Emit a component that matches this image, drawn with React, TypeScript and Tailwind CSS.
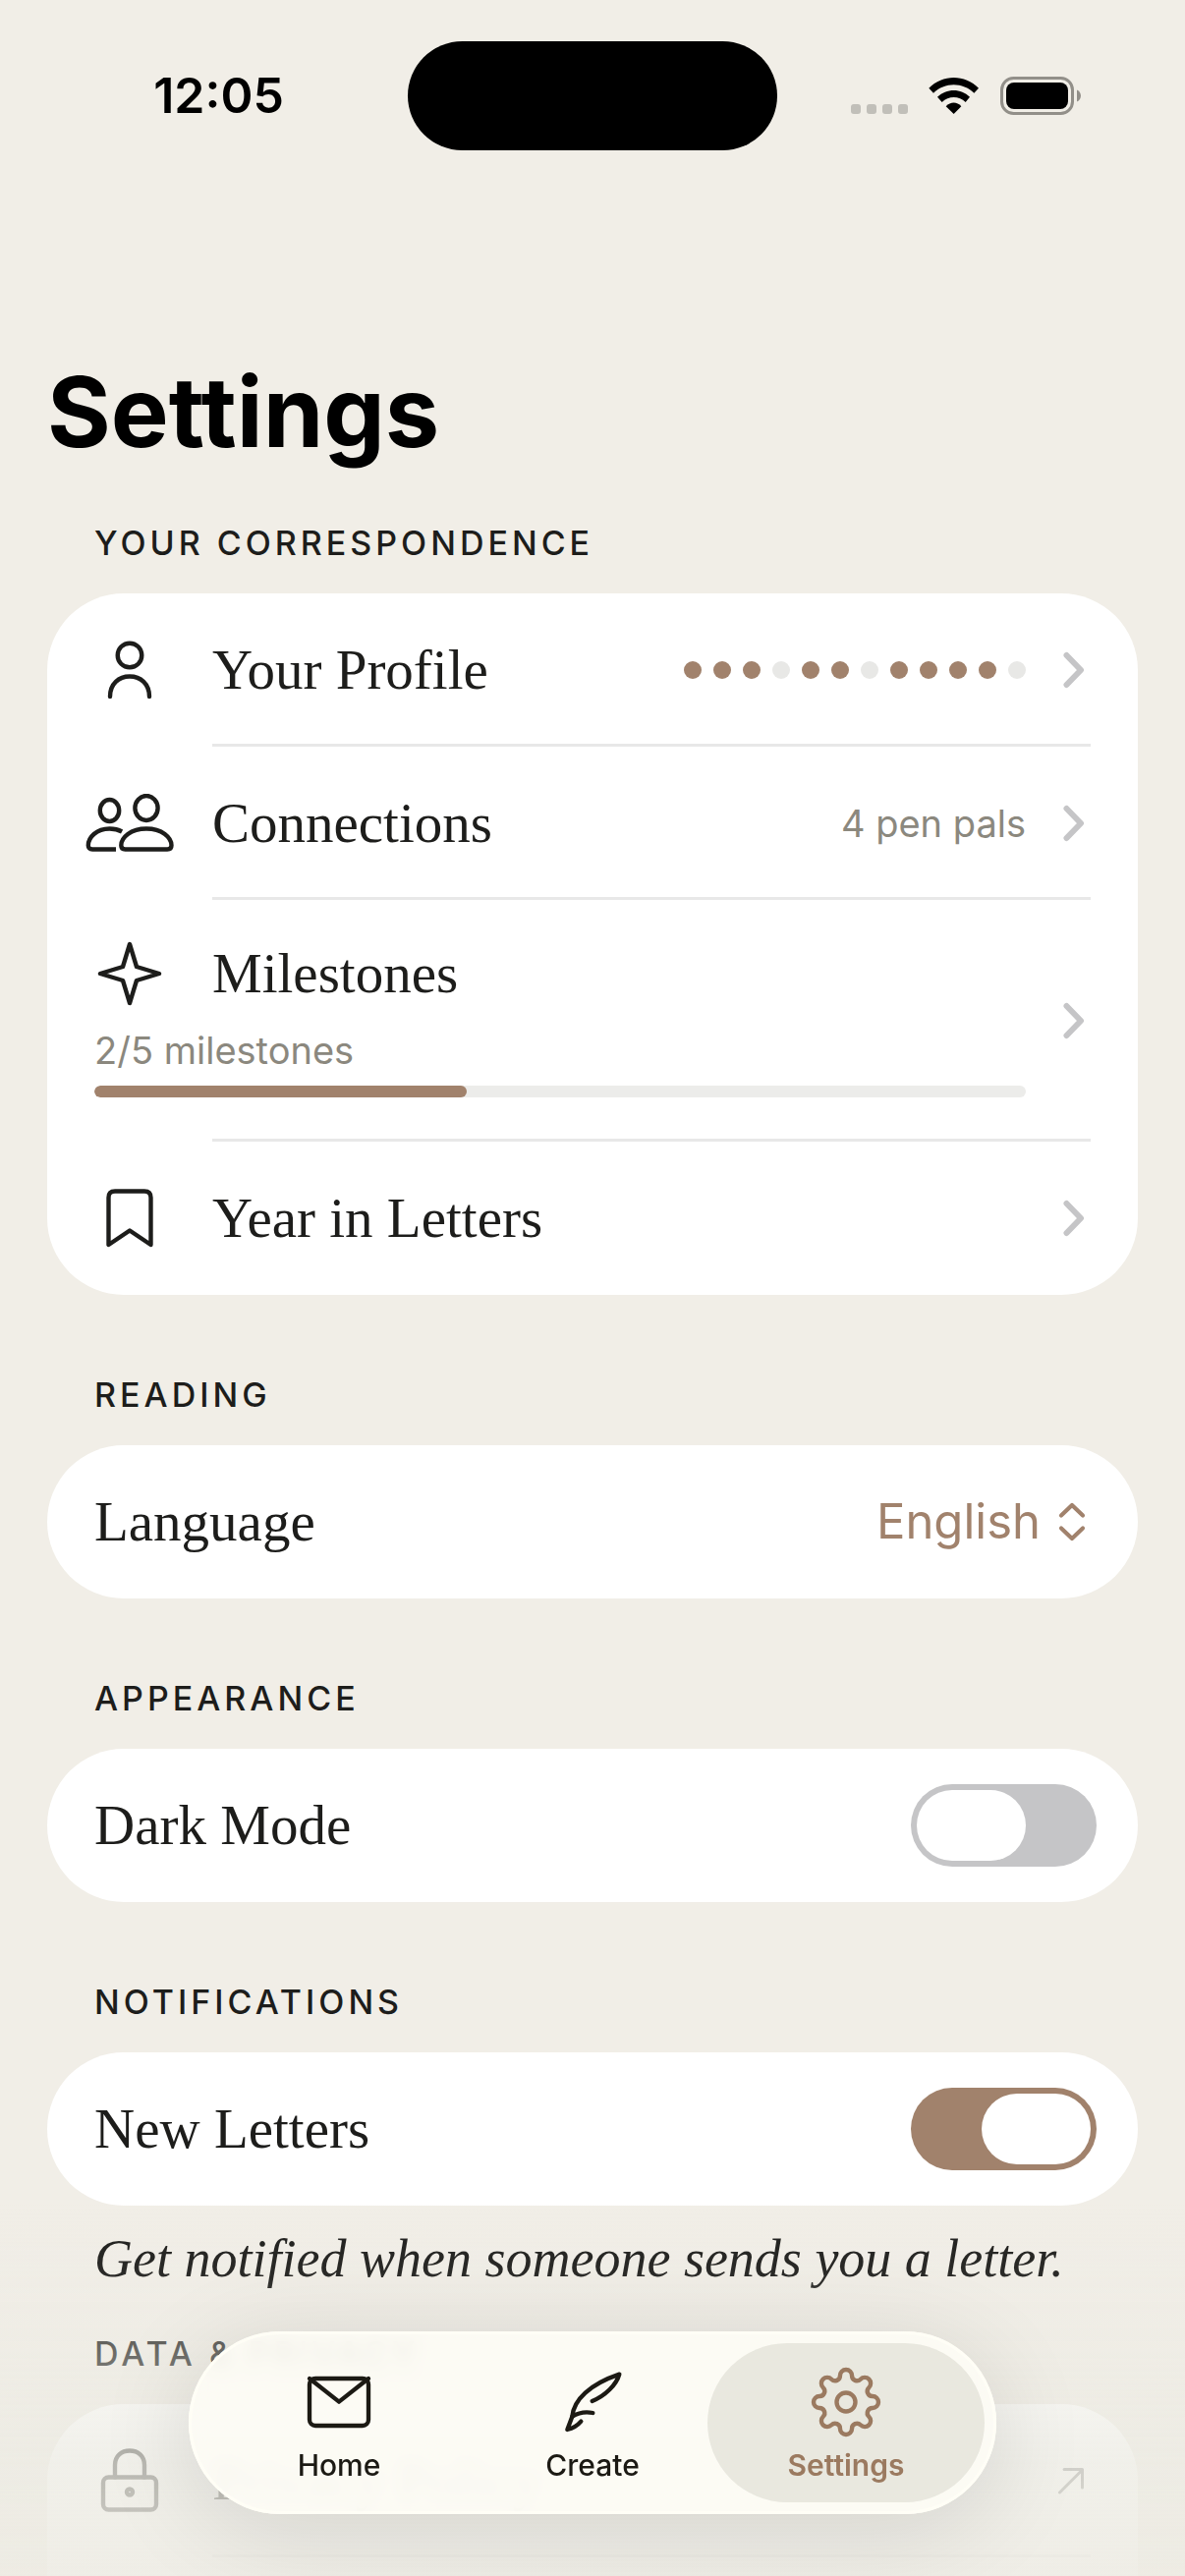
import { useState } from "react";
import type { ReactNode } from "react";

const strokeProps = {
  fill: "none",
  stroke: "currentColor",
  strokeLinecap: "round" as const,
  strokeLinejoin: "round" as const,
};

function SignalDots() {
  return (
    <div className="mt-7 flex gap-1.5">
      {[0, 1, 2, 3].map((i) => (
        <span key={i} className="size-2.5 rounded-[3px] bg-[#c1bfb9]" />
      ))}
    </div>
  );
}

function WifiIcon() {
  return (
    <svg viewBox="285 54 156 117" className="h-[39px] w-[52px]" fill="currentColor" aria-hidden="true">
      <path d="M286 89C328 46 396 46 438 89L424 104C390 70 334 70 300 104Z" />
      <path d="M312 116C340 89 384 89 411 116L398 132C378 112 346 112 326 132Z" />
      <path d="M338 145C352 130 372 130 385 145L362 168Z" />
    </svg>
  );
}

function BatteryIcon() {
  return (
    <svg viewBox="0 0 83 39" className="h-[39px] w-[83px]" aria-hidden="true">
      <rect x="1.5" y="1.5" width="72" height="36" rx="12" fill="none" stroke="#928f89" strokeWidth="3" />
      <rect x="6" y="6" width="63" height="27" rx="8" fill="#000" />
      <path d="M78 13.5c5.300 2 5.300 10 0 12Z" fill="#928f89" />
    </svg>
  );
}

function PersonIcon() {
  return (
    <svg viewBox="0 0 48 60" className="h-[60px] w-12" strokeWidth="4.400" {...strokeProps} aria-hidden="true">
      <circle cx="24" cy="15" r="12.300" />
      <path d="M4 57C4 44 13 36.500 24 36.500S44 44 44 57" />
    </svg>
  );
}

function PeopleIcon() {
  return (
    <svg viewBox="0 0 90 60" className="h-[60px] w-[90px] shrink-0" strokeWidth="4.400" {...strokeProps} strokeLinecap="butt" aria-hidden="true">
      <ellipse cx="24.500" cy="17" rx="9.700" ry="11" />
      <ellipse cx="62" cy="14.500" rx="11.600" ry="12.500" />
      <path d="M40.500 56.500c-2.700 0-4.200-1.500-4.200-4C36.300 44.500 46 35.500 62 35.500S87.500 44.500 87.500 52.500c0 2.500-1.500 4-4.200 4Z" />
      <path d="M31 56.500H7C4.300 56.500 2.800 55 2.800 52.500 2.800 44.500 11 35.500 24.500 35.500c4.800 0 9 1 12.600 3" />
    </svg>
  );
}

function SparkIcon() {
  return (
    <svg viewBox="0 0 66 66" className="size-[66px]" strokeWidth="4.400" {...strokeProps} aria-hidden="true">
      <path d="M33 3L40 26 63 33 40 40 33 63 26 40 3 33 26 26Z" />
    </svg>
  );
}

function BookmarkIcon() {
  return (
    <svg viewBox="0 0 48 60" className="h-[60px] w-12" strokeWidth="4.400" {...strokeProps} aria-hidden="true">
      <path d="M2.500 57V9Q2.500 2.500 9 2.500H39Q45.500 2.500 45.500 9V57L24 42.500Z" />
    </svg>
  );
}

function LockIcon() {
  return (
    <svg viewBox="0 0 60 66" className="h-[66px] w-[60px]" strokeWidth="4.400" {...strokeProps} aria-hidden="true">
      <rect x="3" y="29.500" width="54" height="33" rx="5.500" />
      <path d="M15 29.500V17C15 8 21.500 2.500 30 2.500S45 8 45 17V29.500" />
      <circle cx="30" cy="44.500" r="3" />
    </svg>
  );
}

function Chevron() {
  return (
    <svg viewBox="0 0 22 38" className="h-[38px] w-[22px] shrink-0 text-[#c5c5c7]" strokeWidth="6" {...strokeProps} aria-hidden="true">
      <path d="M3.500 4L18 19 3.500 34" />
    </svg>
  );
}

function UpDownIcon() {
  return (
    <svg viewBox="0 0 28 40" className="h-10 w-7 shrink-0" strokeWidth="4.200" {...strokeProps} aria-hidden="true">
      <path d="M3 13.500L14 3 25 13.500M3 26.500L14 37 25 26.500" />
    </svg>
  );
}

function ArrowUpRight() {
  return (
    <svg viewBox="0 0 28 28" className="size-7 shrink-0 opacity-60" strokeWidth="3" {...strokeProps} aria-hidden="true">
      <path d="M2.500 26L25.500 3M7 2.500H25.500V21" />
    </svg>
  );
}

function MailIcon() {
  return (
    <svg viewBox="30 78 210 174" className="h-[58px] w-[70px]" strokeWidth="13" {...strokeProps} aria-hidden="true">
      <rect x="45" y="93" width="180" height="144" rx="18" />
      <path d="M45 93L135 164 225 93" />
    </svg>
  );
}

function QuillIcon() {
  return (
    <svg viewBox="816 60 186 198" className="h-[66px] w-[62px]" strokeWidth="13" {...strokeProps} aria-hidden="true">
      <path d="M908 156C948 140 982 106 991 74C900 105 852 152 847 203L832 243Q858 237 874 218" />
      <path d="M847 203Q876 185 910 192" />
    </svg>
  );
}

// Eight rounded teeth joined by rounded valleys, centred on the origin.
function gearPath() {
  const toothR = 27;
  const cap = 6;
  const valley = 5.1;
  const valleyR = 29.1;
  const at = (r: number, a: number) => [r * Math.cos(a), r * Math.sin(a)];
  const fmt = (p: number[]) => `${p[0].toFixed(2)} ${p[1].toFixed(2)}`;
  const joint = (a: number, dir: number) => {
    const c = at(toothR, a);
    const v = at(valleyR, a + (dir * Math.PI) / 8);
    const k = cap / (cap + valley);
    return fmt([c[0] + (v[0] - c[0]) * k, c[1] + (v[1] - c[1]) * k]);
  };
  let d = `M${joint(0, -1)}`;
  for (let i = 0; i < 8; i++) {
    const a = (i * Math.PI) / 4;
    d += `A${cap} ${cap} 0 0 1 ${fmt(at(toothR + cap, a))}`;
    d += `A${cap} ${cap} 0 0 1 ${joint(a, 1)}`;
    d += `A${valley} ${valley} 0 0 0 ${joint(a + Math.PI / 4, -1)}`;
  }
  return d + "Z";
}

function GearIcon() {
  return (
    <svg viewBox="-36 -36 72 72" className="size-[72px]" strokeWidth="4.400" {...strokeProps} aria-hidden="true">
      <path d={gearPath()} />
      <circle r="9.500" />
    </svg>
  );
}

function SectionTitle({ children }: { children: ReactNode }) {
  return (
    <h2 className="px-12 text-[34px]/[40px] font-medium tracking-[4px] text-[#1d1d1b] uppercase">{children}</h2>
  );
}

function Card({ children }: { children: ReactNode }) {
  return <div className="mt-[31px] overflow-hidden rounded-[78px] bg-white">{children}</div>;
}

const serif = "font-['Liberation_Serif',serif] text-[57px]/[64px]";

function Row({ icon, title, value, end }: { icon: ReactNode; title: string; value?: ReactNode; end?: ReactNode }) {
  return (
    <a href="#" className="flex h-[156px] items-center pr-[54px] pl-12">
      <span className="mr-12 flex w-[72px] shrink-0 justify-center">{icon}</span>
      <span className={serif}>{title}</span>
      <span className="mr-[38px] ml-auto">{value}</span>
      {end ?? <Chevron />}
    </a>
  );
}

function Separator() {
  return <hr className="-mt-[3px] mr-12 ml-[168px] h-[3px] border-0 bg-[#e8e8e8]" />;
}

function ToggleRow({ label, initial }: { label: string; initial: boolean }) {
  const [on, setOn] = useState(initial);
  return (
    <label className="flex h-[156px] items-center justify-between pr-[42px] pl-12">
      <span className={serif}>{label}</span>
      <input
        type="checkbox"
        role="switch"
        checked={on}
        onChange={(e) => setOn(e.target.checked)}
        className="flex h-[84px] w-[189px] appearance-none items-center rounded-full bg-[#c5c5c7] p-1.5 before:h-[72px] before:w-[111px] before:rounded-full before:bg-white checked:justify-end checked:bg-[#a1826c]"
      />
    </label>
  );
}

const profileSteps = [true, true, true, false, true, true, false, true, true, true, true, false];

function ProfileDots() {
  return (
    <span className="flex gap-3">
      {profileSteps.map((done, i) => (
        <span key={i} className={`size-[18px] rounded-full ${done ? "bg-[#a1826c]" : "bg-[#e8e8e6]"}`} />
      ))}
    </span>
  );
}

function MilestonesRow({ done, total }: { done: number; total: number }) {
  return (
    <a href="#" className="flex items-center gap-[38px] pr-[54px] pl-12">
      <div className="flex-1 pt-[43px] pb-[45px]">
        <div className="flex h-16 items-center gap-12">
          <span className="flex w-[72px] shrink-0 justify-center"><SparkIcon /></span>
          <span className={serif}>Milestones</span>
        </div>
        <p className="mt-[22px] text-[38px]/[48px] text-[#8b887e]">{done}/{total} milestones</p>
        <div className="mt-3 h-3 overflow-hidden rounded-full bg-[#ececea]">
          <div className="h-full rounded-full bg-[#a1826c]" style={{ width: `${(done / total) * 100}%` }} />
        </div>
      </div>
      <Chevron />
    </a>
  );
}

const tabs = [
  { name: "Home", icon: <MailIcon /> },
  { name: "Create", icon: <QuillIcon /> },
  { name: "Settings", icon: <GearIcon /> },
];

function TabBar() {
  const [active, setActive] = useState("Settings");
  return (
    <nav className="fixed bottom-[63px] left-1/2 flex -translate-x-1/2 rounded-[93px] bg-[#fdfcf5]/90 p-3 shadow-[0_16px_100px_rgba(0,0,0,0.12)] ring-3 ring-[#fffef6] ring-inset backdrop-blur-sm">
      {tabs.map(({ name, icon }) => (
        <button
          key={name}
          type="button"
          onClick={() => setActive(name)}
          className={`-ml-6 flex h-[162px] w-[282px] flex-col items-center rounded-[81px] pt-6 first:ml-0 ${
            active === name ? "bg-[#e9e8df] text-[#9b7a60]" : "text-[#1c1a14]"
          }`}
        >
          <span className="flex h-[72px] items-center">{icon}</span>
          <span className={`mt-2.5 text-[30px]/[36px] ${active === name ? "font-semibold" : "font-medium"}`}>{name}</span>
        </button>
      ))}
    </nav>
  );
}

export default function App() {
  return (
    <div className="h-screen overflow-hidden bg-[#f1eee7] font-['Inter',sans-serif] text-[#1d1d1b]">
      <header className="grid h-[194px] grid-cols-[1fr_376px_1fr] items-center text-black">
        <time className="pl-[30px] text-center text-[50px]/[60px] font-semibold">12:05</time>
        <div className="h-[111px] rounded-full bg-black" />
        <div className="flex items-center justify-end gap-[21px] pr-[105px]">
          <SignalDots />
          <WifiIcon />
          <BatteryIcon />
        </div>
      </header>

      <main className="px-12 pt-[165px]">
        <h1 className="text-[99px]/[120px] font-bold text-black">Settings</h1>

        <section className="mt-[54px]">
          <SectionTitle>Your Correspondence</SectionTitle>
          <Card>
            <Row icon={<PersonIcon />} title="Your Profile" value={<ProfileDots />} />
            <Separator />
            <Row
              icon={<PeopleIcon />}
              title="Connections"
              value={<span className="text-[38px]/[48px] text-[#8b887e]">4 pen pals</span>}
            />
            <Separator />
            <MilestonesRow done={2} total={5} />
            <Separator />
            <Row icon={<BookmarkIcon />} title="Year in Letters" />
          </Card>
        </section>

        <section className="mt-[82px]">
          <SectionTitle>Reading</SectionTitle>
          <Card>
            <div className="flex h-[156px] items-center pr-[53px] pl-12">
              <label htmlFor="language" className={serif}>Language</label>
              <div className="ml-auto flex items-center gap-[18px] text-[#a1826c]">
                <select id="language" className="appearance-none bg-transparent text-right text-[49px]/[60px]">
                  <option>English</option>
                </select>
                <UpDownIcon />
              </div>
            </div>
          </Card>
        </section>

        <section className="mt-[82px]">
          <SectionTitle>Appearance</SectionTitle>
          <Card>
            <ToggleRow label="Dark Mode" initial={false} />
          </Card>
        </section>

        <section className="mt-[82px]">
          <SectionTitle>Notifications</SectionTitle>
          <Card>
            <ToggleRow label="New Letters" initial={true} />
          </Card>
          <p className="mt-[18px] px-12 font-['Liberation_Serif',serif] text-[54px]/[72px] whitespace-nowrap italic">
            Get notified when someone sends you a letter.
          </p>
        </section>

        <section className="mt-[41px]">
          <SectionTitle>Data &amp; Privacy</SectionTitle>
          <Card>
            <Row icon={<LockIcon />} title="Privacy Policy" end={<ArrowUpRight />} />
            <Separator />
            <div className="h-[156px]" />
          </Card>
        </section>
      </main>

      <div className="pointer-events-none fixed inset-x-0 bottom-0 h-[380px] bg-[linear-gradient(to_bottom,rgba(236,235,227,0),rgba(236,235,227,0.07)_20%,rgba(236,235,227,0.38)_40%,rgba(236,235,227,0.76)_70%,rgba(237,235,227,0.88))]" />
      <TabBar />
    </div>
  );
}
